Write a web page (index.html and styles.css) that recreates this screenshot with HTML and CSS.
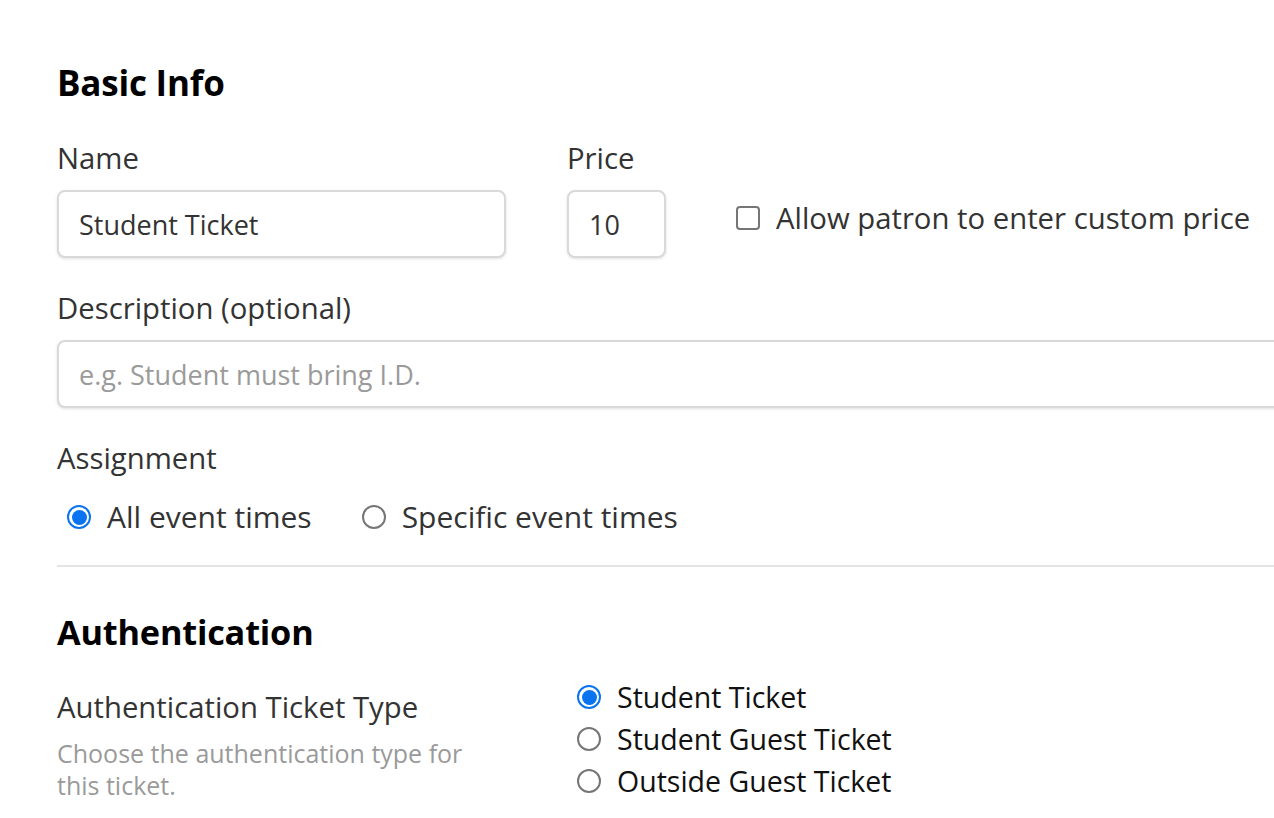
FILE: index.html
```html
<!DOCTYPE html>
<html lang="en">
<head>
<meta charset="utf-8">
<title>Ticket settings</title>
<link rel="stylesheet" href="styles.css">
</head>
<body>
<main class="page">
  <section class="section">
    <h2 class="section-title">Basic Info</h2>
    <div class="row">
      <div class="field field-name">
        <label class="label" for="name">Name</label>
        <input id="name" class="input" type="text" value="Student Ticket">
      </div>
      <div class="field field-price">
        <label class="label" for="price">Price</label>
        <input id="price" class="input" type="text" value="10">
      </div>
      <label class="check">
        <span class="checkbox"></span>
        <span>Allow patron to enter custom price</span>
      </label>
    </div>
    <div class="field field-desc">
      <label class="label" for="desc">Description (optional)</label>
      <input id="desc" class="input input-wide" type="text" placeholder="e.g. Student must bring I.D.">
    </div>
    <div class="field field-assign">
      <span class="label">Assignment</span>
      <div class="radio-row">
        <label class="radio-opt"><span class="radio is-on"></span><span>All event times</span></label>
        <label class="radio-opt"><span class="radio"></span><span>Specific event times</span></label>
      </div>
    </div>
  </section>
  <hr class="divider">
  <section class="section">
    <h2 class="section-title title-auth">Authentication</h2>
    <div class="auth-grid">
      <div class="auth-info">
        <div class="label auth-label">Authentication Ticket Type</div>
        <p class="help">Choose the authentication type for this ticket.</p>
      </div>
      <div class="radio-list">
        <label class="radio-opt"><span class="radio is-on"></span><span>Student Ticket</span></label>
        <label class="radio-opt"><span class="radio"></span><span>Student Guest Ticket</span></label>
        <label class="radio-opt"><span class="radio"></span><span>Outside Guest Ticket</span></label>
      </div>
    </div>
  </section>
</main>
</body>
</html>
```
FILE: styles.css
```css
* { box-sizing: border-box; }

html, body {
  margin: 0;
  background: #ffffff;
  overflow: hidden;
}

body {
  font-family: "Open Sans", "Noto Sans", "Liberation Sans", sans-serif;
  color: #333333;
  width: 1274px;
  height: 818px;
}

.page {
  padding: 62px 0 0 57px;
}

.section-title {
  margin: 0;
  font-size: 35px;
  font-weight: 700;
  color: #000000;
  line-height: 42px;
  letter-spacing: -0.2px;
}

.title-auth { font-size: 34.3px; }

.row {
  display: flex;
  align-items: flex-start;
  margin-top: 38px;
}

.field {
  display: flex;
  flex-direction: column;
}

.label {
  font-size: 29.3px;
  line-height: 32px;
  color: #333333;
  margin-bottom: 16px;
}

.input {
  height: 68px;
  border: 2px solid #d9d9d9;
  border-radius: 8px;
  box-shadow: 0 1px 3px rgba(0, 0, 0, 0.12);
  padding: 0 20px;
  font-family: inherit;
  font-size: 27px;
  color: #333333;
  background: #ffffff;
  outline: none;
}

.input::placeholder { color: #9a9a9a; }

.field-name .input { width: 449px; }

.field-price { margin-left: 61px; }
.field-price .input { width: 99px; }

.check {
  display: flex;
  align-items: center;
  gap: 16px;
  margin-left: 70px;
  margin-top: 59px;
  font-size: 29.3px;
  line-height: 34px;
  color: #333333;
}

.checkbox {
  width: 24px;
  height: 24px;
  border: 2px solid #767676;
  border-radius: 4px;
  flex: none;
}

.field-desc { margin-top: 34px; }

.input-wide { width: 1260px; }

.field-assign { margin-top: 34px; }

.field-assign .label { margin-bottom: 26px; }

.radio-row {
  display: flex;
  gap: 50px;
  padding-left: 10px;
}

.radio-opt {
  display: flex;
  align-items: center;
  gap: 16px;
  font-size: 30px;
  line-height: 34px;
  color: #333333;
}

.radio {
  width: 24px;
  height: 24px;
  border-radius: 50%;
  border: 2px solid #767676;
  flex: none;
  position: relative;
}

.radio.is-on {
  border: 2.5px solid #0a74f0;
}

.radio.is-on::after {
  content: "";
  position: absolute;
  inset: 2.5px;
  border-radius: 50%;
  background: #0a74f0;
}

.divider {
  border: 0;
  border-top: 2px solid #e4e4e4;
  margin: 31px 0 0 0;
}

.title-auth { margin-top: 44px; }

.auth-grid {
  display: flex;
  align-items: flex-start;
  margin-top: 27px;
}

.auth-info { width: 520px; }

.auth-label { margin: 11px 0 14px; }

.help {
  margin: 0;
  font-size: 25px;
  line-height: 32px;
  color: #9a9a9a;
  width: 420px;
}

.radio-list {
  display: flex;
  flex-direction: column;
  gap: 8px;
}

.radio-list .radio-opt {
  font-size: 28.5px;
  color: #111111;
}
```
